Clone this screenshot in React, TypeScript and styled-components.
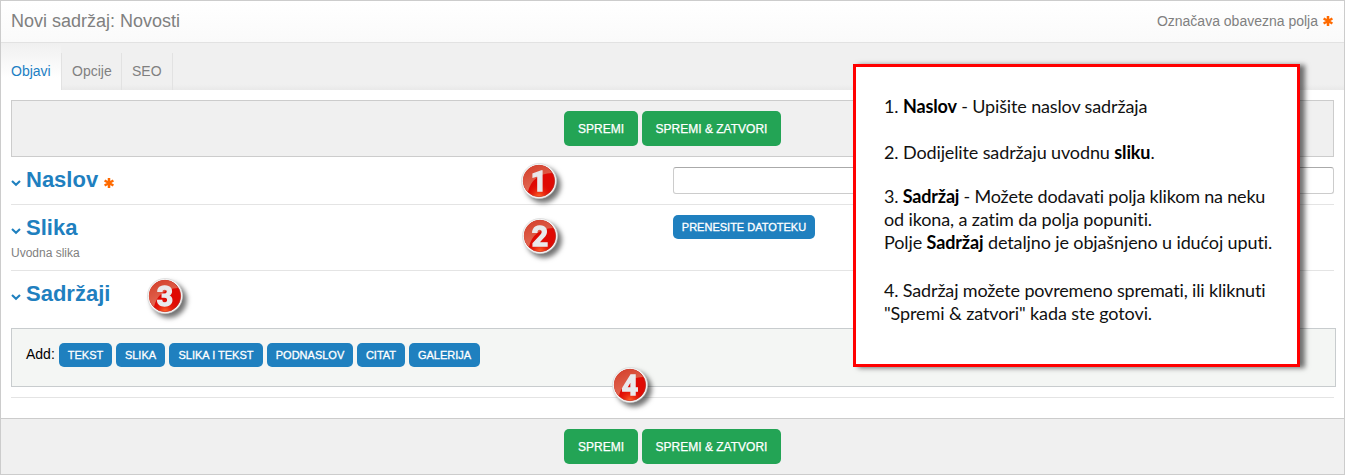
import React from "react";
import styled, { createGlobalStyle } from "styled-components";

const Global = createGlobalStyle`
  * { box-sizing: border-box; }
  body { margin: 0; background: #fff; font-family: "Liberation Sans", Arial, sans-serif; }
`;

const Page = styled.div`
  position: relative;
  display: flex;
  flex-direction: column;
  width: 1345px;
  height: 475px;
  border: 1px solid #ccc;
  background: #fff;
  overflow: hidden;
`;

const Header = styled.header`
  display: flex;
  justify-content: space-between;
  align-items: center;
  height: 42px;
  padding: 0 11px 2px 10px;
  border-bottom: 1px solid #e2e2e2;
  background: linear-gradient(#fff, #fafafa);
`;

const Title = styled.h1`
  margin: 2px 0 0;
  font-size: 18px;
  font-weight: 400;
  color: #808080;
`;

const Required = styled.div`
  display: flex;
  align-items: center;
  gap: 5px;
  margin-top: 1px;
  font-size: 14px;
  color: #808080;
`;

const Tabs = styled.nav`
  display: flex;
  align-items: flex-end;
  height: 47px;
  background: linear-gradient(#f0f0f0 88%, #e9e9e9);
`;

const Tab = styled.div<{ $w: number; $active?: boolean }>`
  width: ${(p) => p.$w}px;
  height: ${(p) => (p.$active ? 47 : 37)}px;
  padding: ${(p) => (p.$active ? "20px 0 0 10px" : "10px 0 0 10px")};
  font-size: 14px;
  line-height: 17px;
  color: ${(p) => (p.$active ? "#1c7fc4" : "#808080")};
  background: ${(p) => (p.$active ? "linear-gradient(#f0f0f0, #fff 75%)" : "transparent")};
  border-right: ${(p) => (p.$active ? "0" : "1px solid #e2e2e2")};
  &:nth-child(2) { border-left: 1px solid #e2e2e2; }
`;

const Content = styled.main`
  display: flex;
  flex-direction: column;
  height: 328px;
  padding: 10px 10px 0;
`;

const ActionBar = styled.div`
  display: flex;
  justify-content: center;
  align-items: center;
  gap: 4px;
  height: 57px;
  border: 1px solid #ccc;
  background: #f0f0f0;
`;

const Footer = styled.footer`
  display: flex;
  justify-content: center;
  align-items: center;
  gap: 4px;
  height: 56px;
  border-top: 1px solid #ccc;
  background: #f0f0f0;
`;

const SaveButton = styled.button<{ $w: number }>`
  width: ${(p) => p.$w}px;
  height: 35px;
  padding: 0;
  border: 0;
  border-radius: 5px;
  background: #23a455;
  color: #fff;
  font: 12px "Liberation Sans", Arial, sans-serif;
  -webkit-text-stroke: 0.25px #fff;
  white-space: nowrap;
`;

const BlueButton = styled.button<{ $w: number }>`
  width: ${(p) => p.$w}px;
  height: 24px;
  flex: none;
  padding: 0;
  border: 0;
  border-radius: 5px;
  background: #1f80bf;
  color: #fff;
  font: 11px "Liberation Sans", Arial, sans-serif;
  -webkit-text-stroke: 0.3px #fff;
  white-space: nowrap;
`;

const Row = styled.section<{ $h: number; $last?: boolean }>`
  display: flex;
  align-items: flex-start;
  height: ${(p) => p.$h}px;
  border-bottom: ${(p) => (p.$last ? "0" : "1px solid #e4e4e4")};
`;

const LabelCell = styled.div`
  width: 662px;
`;

const Heading = styled.h2`
  display: flex;
  align-items: center;
  height: 26px;
  margin: 10px 0 0;
  font-size: 22px;
  line-height: 26px;
  color: #1f80bf;
  svg:first-child { margin: 7px 5px 0 0; }
  svg:last-child:not(:first-child) { margin: 6px 0 0 6px; }
`;

const Hint = styled.div`
  margin-top: 5px;
  font-size: 12px;
  line-height: 14px;
  color: #808080;
`;

const Input = styled.input`
  flex: 1;
  height: 27px;
  margin-top: 10px;
  border: 1px solid #ccc;
  border-top-color: #aaa;
  border-radius: 3px;
  background: #fff;
`;

const FileCell = styled.div`
  padding-top: 10px;
`;

const AddPanel = styled.div`
  display: flex;
  align-items: flex-start;
  gap: 4px;
  width: 1325px;
  height: 59px;
  padding: 14px 14px 0;
  border: 1px solid #c8ccce;
  background: #f4f6f4;
`;

const AddLabel = styled.span`
  width: 29px;
  font-size: 14px;
  line-height: 22px;
  color: #000;
`;

const Divider = styled.div`
  height: 1px;
  margin-top: 10px;
  background: #e4e4e4;
`;

const Note = styled.aside`
  position: absolute;
  left: 852px;
  top: 63px;
  width: 447px;
  height: 303px;
  padding: 28px 0 0 28px;
  border: 3px solid #f00;
  background: #fff;
  box-shadow: 5px 1px 5px rgba(0, 0, 0, 0.55);
  color: #111;
  font-family: Lato, "Noto Sans", sans-serif;
  font-size: 18px;
`;

const Line = styled.div<{ $gap?: number; $ls: number }>`
  height: 23px;
  line-height: 23px;
  margin-top: ${(p) => p.$gap ?? 0}px;
  letter-spacing: ${(p) => p.$ls}px;
  white-space: nowrap;
  b { font-weight: 700; color: #000; }
`;

const BadgeSvg = styled.svg<{ $x: number; $y: number }>`
  position: absolute;
  left: ${(p) => p.$x - 21}px;
  top: ${(p) => p.$y - 21}px;
  filter: drop-shadow(4px 4px 2.5px rgba(0, 0, 0, 0.55));
`;

const Star = () => (
  <svg width="10" height="10" viewBox="0 0 10 10" stroke="#ff6a00" strokeWidth="2.5">
    <path d="M5 0V10M0.6 2.5L9.4 7.5M0.6 7.5L9.4 2.5" />
  </svg>
);

const Chevron = () => (
  <svg width="10" height="7" viewBox="0 0 10 7" fill="none" stroke="#1f80bf" strokeWidth="2.1">
    <path d="M1 1L5 4.8L9 1" />
  </svg>
);

const Badge = ({ n, x, y }: { n: number; x: number; y: number }) => (
  <BadgeSvg $x={x} $y={y} width="40" height="40" viewBox="-20 -20 40 40">
    <defs>
      <linearGradient id={`gloss${n}`} x1="0" y1="0" x2="0.5" y2="1">
        <stop offset="0" stopColor="#d23c28" />
        <stop offset="1" stopColor="#e5705a" />
      </linearGradient>
      <radialGradient id={`glow${n}`} cx="0.5" cy="1" r="0.45">
        <stop offset="0" stopColor="#ff6a2c" />
        <stop offset="1" stopColor="#e00b04" stopOpacity="0" />
      </radialGradient>
    </defs>
    <circle r="17.5" fill="#f6f6f6" stroke="#d2d2d2" strokeWidth="0.6" />
    <circle r="15.7" fill="#df0a04" stroke="#b5291f" strokeWidth="0.7" />
    <path d="M-11 11A15.5 15.5 0 1 1 13 -8Q-7 -7 -11 11Z" fill={`url(#gloss${n})`} />
    <circle r="15.5" fill={`url(#glow${n})`} />
    <text y="9.8" textAnchor="middle" fontFamily="Roboto, Arial, sans-serif" fontWeight="700" fontSize="28.5" fill="#e9eaec" stroke="#e9eaec" strokeWidth="1.3">
      {n}
    </text>
  </BadgeSvg>
);

const SaveButtons = () => (
  <>
    <SaveButton $w={74}>SPREMI</SaveButton>
    <SaveButton $w={139}>SPREMI &amp; ZATVORI</SaveButton>
  </>
);

const blocks: [string, number][] = [
  ["TEKST", 53],
  ["SLIKA", 49],
  ["SLIKA I TEKST", 94],
  ["PODNASLOV", 86],
  ["CITAT", 48],
  ["GALERIJA", 71],
];

export default function App() {
  return (
    <>
      <Global />
      <Page>
        <Header>
          <Title>Novi sadržaj: Novosti</Title>
          <Required>Označava obavezna polja <Star /></Required>
        </Header>
        <Tabs>
          <Tab $w={60} $active>Objavi</Tab>
          <Tab $w={61}>Opcije</Tab>
          <Tab $w={51}>SEO</Tab>
        </Tabs>
        <Content>
          <ActionBar><SaveButtons /></ActionBar>
          <Row $h={48}>
            <LabelCell><Heading><Chevron />Naslov<Star /></Heading></LabelCell>
            <Input />
          </Row>
          <Row $h={66}>
            <LabelCell>
              <Heading><Chevron />Slika</Heading>
              <Hint>Uvodna slika</Hint>
            </LabelCell>
            <FileCell><BlueButton $w={142}>PRENESITE DATOTEKU</BlueButton></FileCell>
          </Row>
          <Row $h={57} $last>
            <LabelCell><Heading><Chevron />Sadržaji</Heading></LabelCell>
          </Row>
          <AddPanel>
            <AddLabel>Add:</AddLabel>
            {blocks.map(([label, w]) => <BlueButton key={label} $w={w}>{label}</BlueButton>)}
          </AddPanel>
          <Divider />
        </Content>
        <Footer><SaveButtons /></Footer>
        <Badge n={1} x={539} y={180.5} />
        <Badge n={2} x={540} y={236} />
        <Badge n={3} x={165} y={295.5} />
        <Badge n={4} x={630} y={384.5} />
        <Note>
          <Line $ls={-0.14}>1. <b>Naslov</b> - Upišite naslov sadržaja</Line>
          <Line $ls={-0.12} $gap={23}>2. Dodijelite sadržaju uvodnu <b>sliku</b>.</Line>
          <Line $ls={-0.19} $gap={21}>3. <b>Sadržaj</b> - Možete dodavati polja klikom na neku</Line>
          <Line $ls={-0.12}>od ikona, a zatim da polja popuniti.</Line>
          <Line $ls={-0.12}>Polje <b>Sadržaj</b> detaljno je objašnjeno u idućoj uputi.</Line>
          <Line $ls={-0.16} $gap={25}>4. Sadržaj možete povremeno spremati, ili kliknuti</Line>
          <Line $ls={-0.1}>"Spremi &amp; zatvori" kada ste gotovi.</Line>
        </Note>
      </Page>
    </>
  );
}
